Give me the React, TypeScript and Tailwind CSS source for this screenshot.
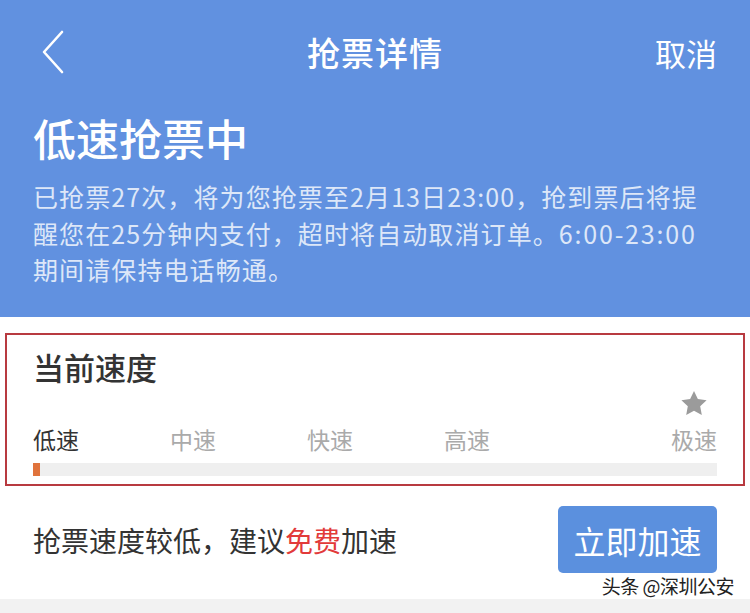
import React from "react";

const Star = () => (
  <svg width="28" height="27" viewBox="0 0 24 23" className="block">
    <path
      d="M12 0.8l3.3 6.9 7.5 1-5.5 5.2 1.4 7.5L12 17.8l-6.7 3.6 1.4-7.5L1.2 8.7l7.5-1z"
      fill="#9b9b9b"
    />
  </svg>
);

export default function App() {
  return (
    <div className="relative w-[750px] h-[613px] overflow-hidden bg-white flex flex-col font-['Noto_Sans_CJK_SC','Noto_Sans',sans-serif]">
      {/* Blue header */}
      <div className="bg-[#6191e0] h-[317px] flex flex-col px-[33px]">
        <div className="grid grid-cols-[1fr_auto_1fr] items-center h-[104px]">
          <div className="flex items-center pl-[8px]">
            <svg width="24" height="44" viewBox="0 0 24 44" fill="none">
              <path d="M21 2 L3 22 L21 42" stroke="white" strokeWidth="2.6" strokeLinecap="round" strokeLinejoin="round" />
            </svg>
          </div>
          <div className="text-white text-[33px] font-medium leading-none tracking-[1px]">抢票详情</div>
          <div className="text-white text-[31px] leading-none text-right">取消</div>
        </div>
        <div className="mt-[9px] text-white text-[43px] font-medium leading-[48px]">低速抢票中</div>
        <div className="mt-[17px] text-[#dde7f8] text-[25px] leading-[36.5px] tracking-[1.1px] whitespace-nowrap">
          已抢票27次，将为您抢票至2月13日23:00，抢到票后将提
          <br />
          醒您在25分钟内支付，超时将自动取消订单。<span className="tracking-[1.8px]">6:00-23:00</span>
          <br />
          期间请保持电话畅通。
        </div>
      </div>

      {/* Current speed box */}
      <div className="mt-[16px] mx-[5px] h-[153px] border-2 border-[#b83a40] flex flex-col px-[26px] pb-[8px]">
        <div className="mt-[12px] text-[#333333] text-[31px] font-medium leading-[40px]">当前速度</div>
        <div className="mt-auto flex items-end">
          <div className="w-[137px] text-[23px] leading-[30px] text-[#333333]">低速</div>
          <div className="w-[137px] text-[23px] leading-[30px] text-[#aaaaaa]">中速</div>
          <div className="w-[137px] text-[23px] leading-[30px] text-[#aaaaaa]">快速</div>
          <div className="w-[137px] text-[23px] leading-[30px] text-[#aaaaaa]">高速</div>
          <div className="flex-1 flex justify-end">
            <div className="flex flex-col items-center">
              <Star />
              <div className="mt-[7px] text-[23px] leading-[30px] text-[#aaaaaa]">极速</div>
            </div>
          </div>
        </div>
        <div className="mt-[9px] h-[13px] bg-[#efefef] flex">
          <div className="w-[7px] h-full bg-[#e0733c]" />
        </div>
      </div>

      {/* Bottom row */}
      <div className="mt-[20px] flex items-center justify-between pl-[33px] pr-[33px]">
        <div className="text-[28px] leading-none text-[#333333]">
          抢票速度较低，建议<span className="text-[#e23a3a]">免费</span>加速
        </div>
        <div className="w-[159px] h-[67px] rounded-[5px] bg-[#5b90de] flex items-center justify-center text-white text-[32px] leading-none">
          立即加速
        </div>
      </div>

      <div className="flex-1" />
      <div className="h-[14px] bg-[#f2f2f2]" />

      {/* Watermark */}
      <div className="absolute right-[16px] top-[574px] text-[19px] leading-[24px] text-[#222222] [text-shadow:0_0_2px_white,0_0_2px_white] tracking-[-0.5px]">
        头条 @深圳公安
      </div>
    </div>
  );
}
